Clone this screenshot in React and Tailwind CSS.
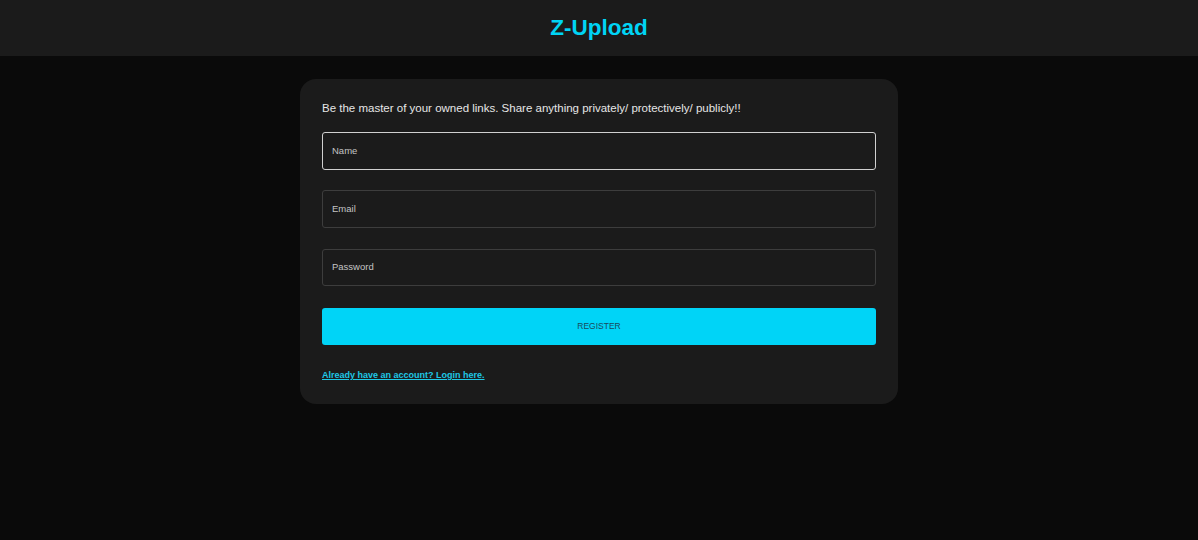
export default function App() {
  const font = { fontFamily: '"Liberation Sans", Arial, sans-serif' };
  return (
    <div className="min-h-[540px] w-full bg-[#0a0a0a]" style={font}>
      <header className="h-[56px] bg-[#1b1b1b] flex items-center justify-center">
        <h1 className="text-[22.5px] font-bold text-[#00d4f5] leading-none pt-[1px]">Z-Upload</h1>
      </header>
      <div className="flex justify-center pt-[23px]">
        <div className="w-[598px] bg-[#1b1b1b] rounded-[16px] px-[22px] pt-[21px] pb-[23px] flex flex-col">
          <p className="text-[11.5px] leading-[16px] text-[#e6e6e6]">
            Be the master of your owned links. Share anything privately/ protectively/ publicly!!
          </p>
          <div className="mt-[16px] h-[38px] rounded-[3px] border border-[#d0d0d0] flex items-center px-[9px]">
            <span className="text-[9.5px] text-[#c4c4c4]">Name</span>
          </div>
          <div className="mt-[20px] h-[38px] rounded-[3px] border border-[#3d3d3d] flex items-center px-[9px]">
            <span className="text-[9.5px] text-[#c4c4c4]">Email</span>
          </div>
          <div className="mt-[21px] h-[37px] rounded-[3px] border border-[#3d3d3d] flex items-center px-[9px]">
            <span className="text-[9.5px] text-[#c4c4c4]">Password</span>
          </div>
          <button className="mt-[22px] h-[37px] rounded-[3px] bg-[#00d4f7] flex items-center justify-center">
            <span className="text-[8.5px] text-[#1a4a5a]">REGISTER</span>
          </button>
          <a href="#" className="mt-[24px] text-[9px] font-bold leading-[12px] text-[#1ec8e6] underline self-start">
            Already have an account? Login here.
          </a>
        </div>
      </div>
    </div>
  );
}
